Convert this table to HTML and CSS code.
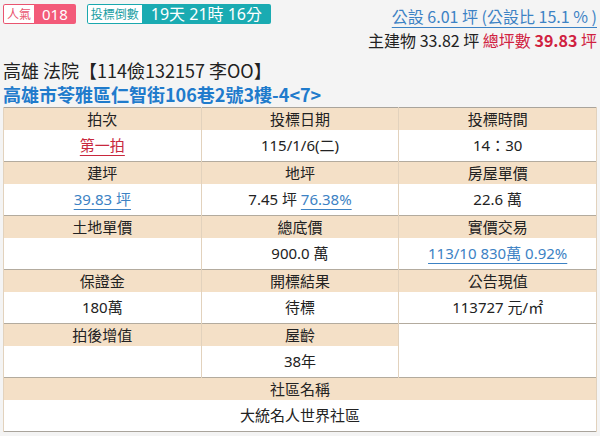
FILE: index.html
```html
<!DOCTYPE html>
<html lang="zh-Hant">
<head>
<meta charset="utf-8">
<link rel="stylesheet" href="styles.css">
</head>
<body>
<div class="page">
  <div class="top">
    <div class="badges">
      <span class="badge badge-pink"><span class="b-label">人氣</span><span class="b-value">018</span></span>
      <span class="badge badge-teal"><span class="b-label">投標倒數</span><span class="b-value">19天 21時 16分</span></span>
    </div>
    <div class="area">
      <div class="area-line1"><a class="link">公設 6.01 坪 (公設比 15.1 % )</a></div>
      <div class="area-line2">主建物 33.82 坪 <span class="red">總坪數 <b>39.83</b> 坪</span></div>
    </div>
  </div>
  <div class="title">高雄 法院【114儉132157 李OO】</div>
  <div class="address">高雄市苓雅區仁智街106巷2號3樓-4&lt;7&gt;</div>
  <table class="info">
    <tr class="hd"><td>拍次</td><td>投標日期</td><td>投標時間</td></tr>
    <tr class="vl"><td><a class="red-link">第一拍</a></td><td>115/1/6(二)</td><td>14：30</td></tr>
    <tr class="hd"><td>建坪</td><td>地坪</td><td>房屋單價</td></tr>
    <tr class="vl"><td><a class="link">39.83 坪</a></td><td>7.45 坪 <a class="link">76.38%</a></td><td>22.6 萬</td></tr>
    <tr class="hd"><td>土地單價</td><td>總底價</td><td>實價交易</td></tr>
    <tr class="vl"><td></td><td>900.0 萬</td><td><a class="link">113/10 830萬 0.92%</a></td></tr>
    <tr class="hd"><td>保證金</td><td>開標結果</td><td>公告現值</td></tr>
    <tr class="vl"><td>180萬</td><td>待標</td><td>113727 元/㎡</td></tr>
    <tr class="hd"><td>拍後增值</td><td>屋齡</td><td class="blank" rowspan="2"></td></tr>
    <tr class="vl"><td></td><td>38年</td></tr>
    <tr class="hd"><td colspan="3">社區名稱</td></tr>
    <tr class="vl last"><td colspan="3">大統名人世界社區</td></tr>
  </table>
</div>
</body>
</html>
```
FILE: styles.css
```css
html, body {
  margin: 0;
  padding: 0;
  background: #f4f4f4;
}
body {
  font-family: "Noto Sans", "Noto Sans CJK TC", sans-serif;
  color: #222;
}
.page {
  padding: 4px 3px 0 3px;
}
.top {
  display: flex;
  justify-content: space-between;
  align-items: flex-start;
  height: 54px;
}
.badges {
  display: flex;
  gap: 11px;
}
.badge {
  display: inline-flex;
  height: 20px;
  border-radius: 2px;
  overflow: hidden;
  font-family: "Noto Sans CJK TC", sans-serif;
}
.b-label {
  background: #fff;
  font-size: 12px;
  line-height: 18px;
  padding: 0 3px;
  border: 1px solid;
  border-right: none;
  border-radius: 2px 0 0 2px;
}
.b-value {
  color: #fff;
  font-family: "Noto Sans", "Noto Sans CJK TC", sans-serif;
  font-size: 15px;
  line-height: 20px;
  padding: 0 8px;
}
.badge-pink .b-label { color: #e9546f; border-color: #e9546f; }
.badge-pink .b-value { background: #f35a79; }
.badge-teal .b-label { color: #1a9ea3; border-color: #1aa8ae; }
.badge-teal .b-value { background: #1aabb2; font-size: 16px; padding: 0 9px; }
.area {
  text-align: right;
  font-family: "Noto Sans CJK TC", sans-serif;
}
.area-line1 {
  font-size: 16px;
  line-height: 20px;
  margin-top: 2px;
}
.area-line2 {
  font-size: 16px;
  line-height: 20px;
  margin-top: 4px;
}
.link {
  color: #3c82c4;
  text-decoration: underline;
  text-underline-offset: 4px;
  text-decoration-thickness: 1px;
}
.red { color: #d0213f; }
.red-link {
  color: #c8283d;
  text-decoration: underline;
  text-underline-offset: 4px;
}
.title {
  font-family: "Noto Sans CJK TC", sans-serif;
  font-size: 18px;
  line-height: 24px;
  color: #222;
}
.address {
  font-family: "Noto Sans CJK TC", sans-serif;
  font-size: 18px;
  line-height: 24px;
  font-weight: bold;
  color: #1f7bcc;
  margin-bottom: 1px;
}
.info {
  width: 594px;
  border-collapse: collapse;
  table-layout: fixed;
  border: 1px solid #a9a49c;
  font-family: "Noto Sans", "Noto Sans CJK TC", sans-serif;
  font-size: 15px;
}
.info td {
  text-align: center;
  padding: 0;
  border-left: 1px solid #e2d2bd;
  border-right: 1px solid #e2d2bd;
}
.info .hd td {
  background: #f4e0c7;
  height: 22px;
  line-height: 22px;
  border-top: 1px solid #b3ab9e;
  font-family: "Noto Sans CJK TC", sans-serif;
}
.info .hd:first-child td { border-top: none; }
.info .vl td {
  background: #fff;
  height: 31px;
  line-height: 31px;
}
.info td.blank {
  background: #fff;
  border-top: 1px solid #b3ab9e;
}
```
